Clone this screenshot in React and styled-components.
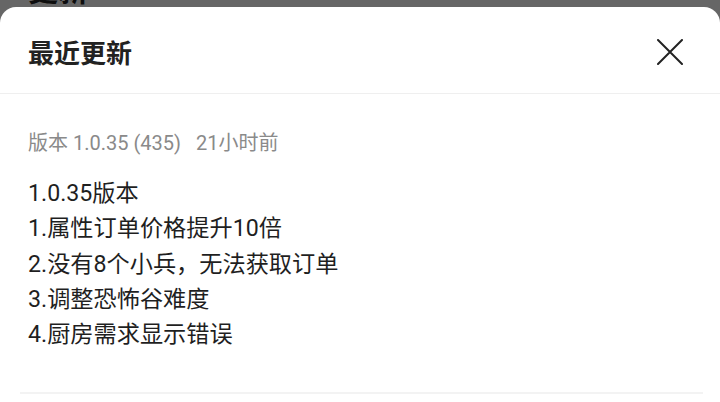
import React from 'react';
import styled, { createGlobalStyle } from 'styled-components';

const GlobalStyle = createGlobalStyle`
  html, body {
    margin: 0;
    padding: 0;
    height: 402px;
    overflow: hidden;
    background: #666666;
    font-family: Roboto, "Noto Sans CJK SC", sans-serif;
  }
`;

// the page behind the sheet, only its bottom edge peeks out
const Backdrop = styled.div`
  height: 7px;
  overflow: hidden;
  display: flex;
  align-items: flex-end;
  padding-left: 28px;
`;

const PageTitle = styled.div`
  font-size: 30px;
  font-weight: 700;
  line-height: 30px;
  color: #0d0d0d;
  margin-bottom: 1px;
`;

const Sheet = styled.div`
  background: #ffffff;
  border-radius: 16px 16px 0 0;
  height: 395px;
  display: flex;
  flex-direction: column;
`;

const Header = styled.div`
  height: 87px;
  box-sizing: border-box;
  padding: 3px 37px 0 28px;
  display: flex;
  align-items: center;
  justify-content: space-between;
  border-bottom: 1px solid #efefef;
`;

const Title = styled.h2`
  margin: 0;
  font-size: 26px;
  font-weight: 700;
  color: #222222;
`;

const CloseButton = styled.button`
  border: 0;
  padding: 0;
  background: none;
  width: 26px;
  height: 26px;
  display: flex;
`;

const Body = styled.div`
  padding: 35px 28px 0;
`;

const Meta = styled.div`
  font-size: 20px;
  line-height: 28px;
  color: #8a8a8a;
`;

const Gap = styled.span`
  display: inline-block;
  width: ${(p) => p.w}px;
`;

const Notes = styled.div`
  margin-top: 19px;
  font-size: 23.2px;
  line-height: 35.3px;
  color: #1f1f1f;
`;

const Divider = styled.hr`
  margin: 40px 17px 0 20px;
  border: 0;
  border-top: 2px solid #f3f3f3;
`;

const notes = [
  '1.0.35版本',
  '1.属性订单价格提升10倍',
  '2.没有8个小兵，无法获取订单',
  '3.调整恐怖谷难度',
  '4.厨房需求显示错误',
];

function App() {
  return (
    <>
      <GlobalStyle />
      <Backdrop>
        <PageTitle>更新</PageTitle>
      </Backdrop>
      <Sheet>
        <Header>
          <Title>最近更新</Title>
          <CloseButton aria-label="关闭">
            <svg width="26" height="26" viewBox="0 0 26 26">
              <path
                d="M1 1L25 25M25 1L1 25"
                stroke="#222"
                strokeWidth="2"
                strokeLinecap="round"
              />
            </svg>
          </CloseButton>
        </Header>
        <Body>
          <Meta>
            版本 1.0.35 (435)<Gap w={15} />21小时前
          </Meta>
          <Notes>
            {notes.map((line) => (
              <div key={line}>{line}</div>
            ))}
          </Notes>
        </Body>
        <Divider />
      </Sheet>
    </>
  );
}

export default App;
